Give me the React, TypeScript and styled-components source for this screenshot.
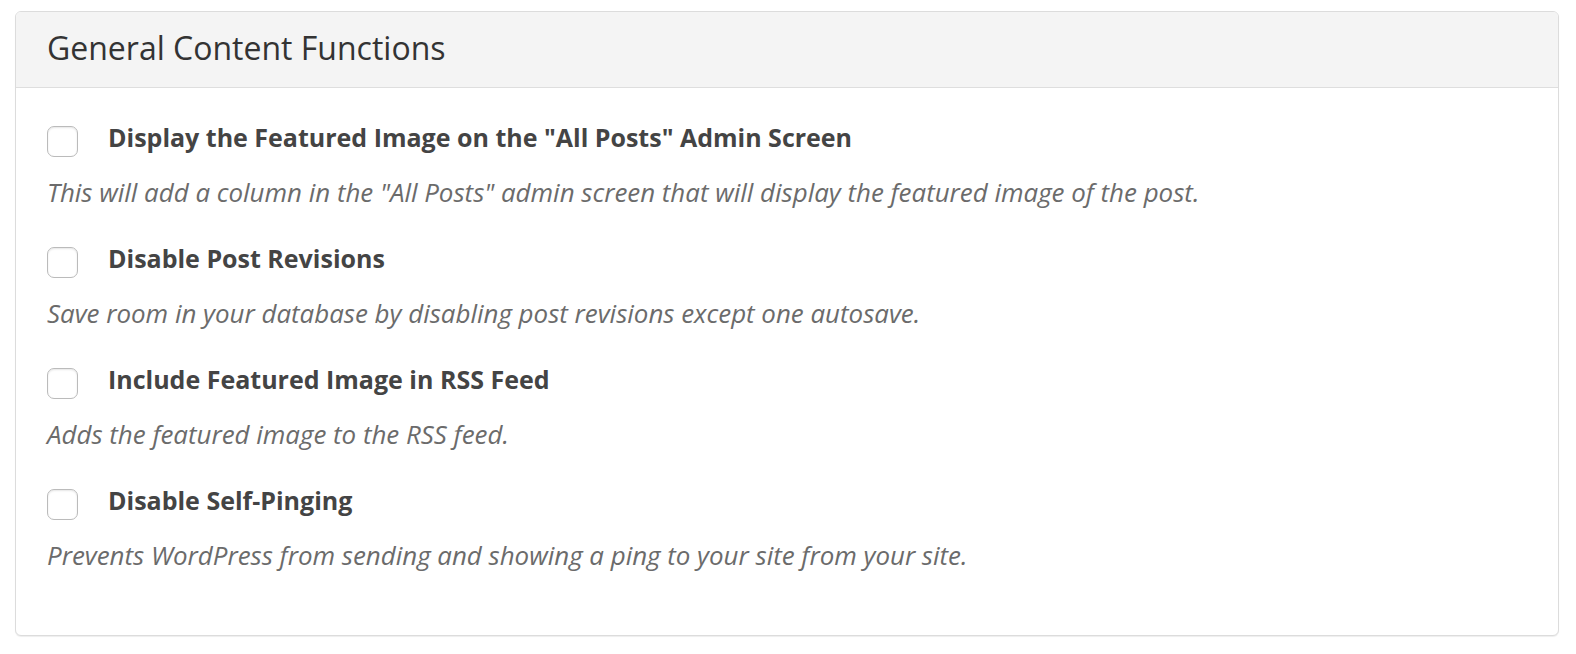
import React from "react";
import styled, { createGlobalStyle } from "styled-components";

const Global = createGlobalStyle`
  html, body { margin: 0; padding: 0; background: #fff; }
  body { font-family: "Open Sans", "Liberation Sans", sans-serif; }
`;

const Page = styled.div`
  padding: 11px 17px 16px 15px;
`;

const Panel = styled.section`
  border: 1px solid #dcdcdc;
  border-radius: 6px;
  background: #fff;
  box-shadow: 0 1px 1px rgba(0, 0, 0, 0.07);
  overflow: hidden;
`;

const Header = styled.header`
  height: 75px;
  background: #f4f4f4;
  border-bottom: 1px solid #dedede;
  display: flex;
  align-items: center;
  padding: 0 31px;
`;

const Title = styled.h2`
  margin: -3px 0 0;
  font-size: 32px;
  line-height: 40px;
  font-weight: 400;
  color: #333;
`;

const Body = styled.div`
  padding: 32px 31px 63px 31px;
  display: flex;
  flex-direction: column;
  gap: 32px;
`;

const Option = styled.div`
  display: flex;
  flex-direction: column;
  gap: 18px;
`;

const Row = styled.label`
  display: flex;
  align-items: flex-start;
  gap: 30px;
`;

const Box = styled.span`
  flex: none;
  width: 29px;
  height: 29px;
  margin-top: 6px;
  border: 1px solid #bbbbbb;
  border-radius: 7px;
  background: #fff;
  box-shadow: inset 0 1px 2px rgba(0, 0, 0, 0.1);
`;

const Label = styled.span`
  font-size: 25px;
  line-height: 34px;
  font-weight: 700;
  color: #444;
`;

const Desc = styled.p`
  margin: 0;
  font-size: 25.9px;
  line-height: 34px;
  font-style: italic;
  color: #6b6b6b;
`;

const options = [
  {
    label: 'Display the Featured Image on the "All Posts" Admin Screen',
    desc: 'This will add a column in the "All Posts" admin screen that will display the featured image of the post.',
  },
  {
    label: "Disable Post Revisions",
    desc: "Save room in your database by disabling post revisions except one autosave.",
  },
  {
    label: "Include Featured Image in RSS Feed",
    desc: "Adds the featured image to the RSS feed.",
  },
  {
    label: "Disable Self-Pinging",
    desc: "Prevents WordPress from sending and showing a ping to your site from your site.",
  },
];

export default function App() {
  return (
    <>
      <Global />
      <Page>
        <Panel>
          <Header>
            <Title>General Content Functions</Title>
          </Header>
          <Body>
            {options.map((o) => (
              <Option key={o.label}>
                <Row>
                  <Box />
                  <Label>{o.label}</Label>
                </Row>
                <Desc>{o.desc}</Desc>
              </Option>
            ))}
          </Body>
        </Panel>
      </Page>
    </>
  );
}
